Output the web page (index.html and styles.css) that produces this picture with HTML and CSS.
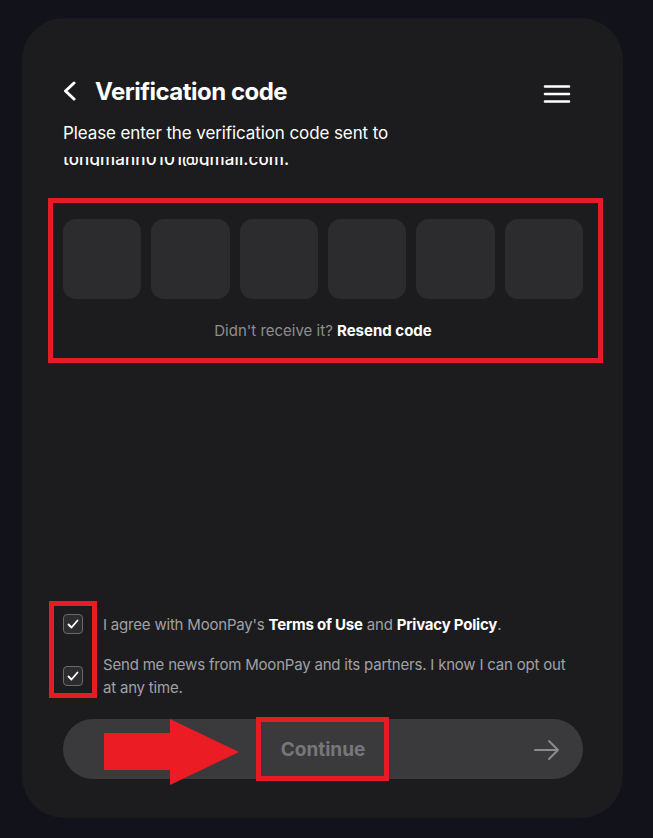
FILE: index.html
```html
<!DOCTYPE html>
<html lang="en">

<head>
  <meta charset="UTF-8">
  <meta name="viewport" content="width=device-width, initial-scale=1.0">
  <title>Verification code</title>
  <link rel="stylesheet" href="styles.css">
</head>

<body>

  <div class="card">

    <!-- Header -->
    <div class="header">
      <div class="header-left">
        <svg class="back" width="14" height="20" viewBox="0 0 14 20">
          <path d="M11 2 L2.5 10 L11 18" fill="none" stroke="#fff" stroke-width="3" stroke-linecap="round" stroke-linejoin="round" />
        </svg>
        <h1>Verification code</h1>
      </div>
      <svg class="menu" width="28" height="20" viewBox="0 0 28 20">
        <path d="M2 2.5 H26 M2 10 H26 M2 17.5 H26" stroke="#fff" stroke-width="2.6" stroke-linecap="round" />
      </svg>
    </div>

    <p class="intro">Please enter the verification code sent to</p>
    <div class="email-clip"><span>tongmanh0101@gmail.com.</span></div>

    <!-- Code inputs -->
    <div class="code-frame">
      <div class="code-boxes">
        <div class="code-box"></div>
        <div class="code-box"></div>
        <div class="code-box"></div>
        <div class="code-box"></div>
        <div class="code-box"></div>
        <div class="code-box"></div>
      </div>
      <p class="resend">Didn't receive it? <b>Resend code</b></p>
    </div>

    <div class="spacer"></div>

    <!-- Consent -->
    <div class="consent">
      <div class="check-mark-frame"></div>
      <div class="consent-row">
        <span class="checkbox">
          <svg width="12" height="10" viewBox="0 0 12 10"><path d="M1.5 5.5 L4.5 8.5 L10.5 1.5" fill="none" stroke="#fff" stroke-width="1.8" stroke-linecap="round" stroke-linejoin="round" /></svg>
        </span>
        <p>I agree with MoonPay's <b>Terms of Use</b> and <b>Privacy Policy</b>.</p>
      </div>
      <div class="consent-row two-line">
        <span class="checkbox">
          <svg width="12" height="10" viewBox="0 0 12 10"><path d="M1.5 5.5 L4.5 8.5 L10.5 1.5" fill="none" stroke="#fff" stroke-width="1.8" stroke-linecap="round" stroke-linejoin="round" /></svg>
        </span>
        <p>Send me news from MoonPay and its partners. I know I can opt out at any time.</p>
      </div>
    </div>

    <!-- Continue button -->
    <div class="continue-wrap">
      <button class="continue-btn">
        <span>Continue</span>
        <svg class="btn-arrow" width="28" height="22" viewBox="0 0 28 22">
          <path d="M2 11 H25 M16 2 L25 11 L16 20" fill="none" stroke="#8a8a8f" stroke-width="2" stroke-linecap="round" stroke-linejoin="round" />
        </svg>
      </button>
      <div class="continue-frame"></div>
      <svg class="red-arrow" width="136" height="67" viewBox="0 0 136 67">
        <polygon points="0,14 66,14 66,0 135,33 66,66 66,51 0,51" fill="#ec1c24" />
      </svg>
    </div>

  </div>

</body>

</html>
```

FILE: styles.css
```css
/* General Reset */
* {
  margin: 0;
  padding: 0;
  box-sizing: border-box;
}

body {
  font-family: Inter, "Noto Sans", sans-serif;
  background-color: #12121b;
  color: #fff;
}

/* Card */
.card {
  width: 601px;
  height: 800px;
  margin: 18px 0 0 22px;
  padding: 58px 40px 39px 41px;
  background-color: #1c1c1e;
  border-radius: 42px;
  display: flex;
  flex-direction: column;
}

/* Header */
.header {
  display: flex;
  align-items: center;
  justify-content: space-between;
  height: 30px;
  padding-right: 12px;
}

.header-left {
  display: flex;
  align-items: center;
  gap: 18px;
}

.header-left h1 {
  font-size: 24px;
  font-weight: 700;
  letter-spacing: -0.5px;
}

.menu {
  margin-top: 5px;
}

.intro {
  margin-top: 15px;
  font-size: 17px;
  line-height: 24px;
  letter-spacing: -0.1px;
}

/* clipped second line of the intro */
.email-clip {
  height: 9px;
  margin-top: 12px;
  overflow: hidden;
  font-size: 17px;
  font-weight: 500;
  letter-spacing: 0.1px;
}

.email-clip span {
  display: block;
  line-height: 24px;
  margin-top: -10px;
}

/* Code inputs */
.code-frame {
  margin: 32px -20px 0 -15px;
  padding: 16px 15px 0 10px;
  height: 165px;
  border: 5px solid #e41d25;
}

.code-boxes {
  display: flex;
  gap: 10px;
}

.code-box {
  flex: 1;
  height: 80px;
  background-color: #2c2c2e;
  border-radius: 13px;
}

.resend {
  margin-top: 22px;
  text-align: center;
  font-size: 15px;
  color: #8e8e93;
}

.resend b {
  color: #fff;
}

.spacer {
  flex: 1;
}

/* Consent */
.consent {
  position: relative;
  display: flex;
  flex-direction: column;
  gap: 17px;
  margin-bottom: 20px;
}

.consent-row {
  display: flex;
  align-items: flex-start;
  gap: 20px;
}

.consent-row.two-line {
  align-items: center;
}

.checkbox {
  flex: none;
  width: 20px;
  height: 20px;
  margin-top: 1px;
  border: 1px solid #6a6a6e;
  border-radius: 4px;
  background-color: #2c2c2e;
  display: flex;
  align-items: center;
  justify-content: center;
}

.two-line .checkbox {
  margin-top: 0;
}

.consent-row p {
  font-size: 15px;
  line-height: 23px;
  color: #a1a1a6;
  letter-spacing: -0.2px;
  padding-right: 6px;
}

.consent-row p b {
  color: #fff;
}

.check-mark-frame {
  position: absolute;
  left: -14px;
  top: -12px;
  width: 48px;
  height: 97px;
  border: 5px solid #e41d25;
}

/* Continue */
.continue-wrap {
  position: relative;
}

.continue-btn {
  width: 100%;
  height: 60px;
  border: none;
  border-radius: 30px;
  background-color: #3a3a3c;
  font-family: inherit;
  font-size: 19px;
  font-weight: 700;
  color: #77777b;
  display: flex;
  align-items: center;
  justify-content: center;
  position: relative;
}

.btn-arrow {
  position: absolute;
  right: 22px;
  top: 20px;
}

.continue-frame {
  position: absolute;
  left: 193px;
  top: -2px;
  width: 133px;
  height: 64px;
  border: 5px solid #e41d25;
}

.red-arrow {
  position: absolute;
  left: 41px;
  top: 0;
}
```
